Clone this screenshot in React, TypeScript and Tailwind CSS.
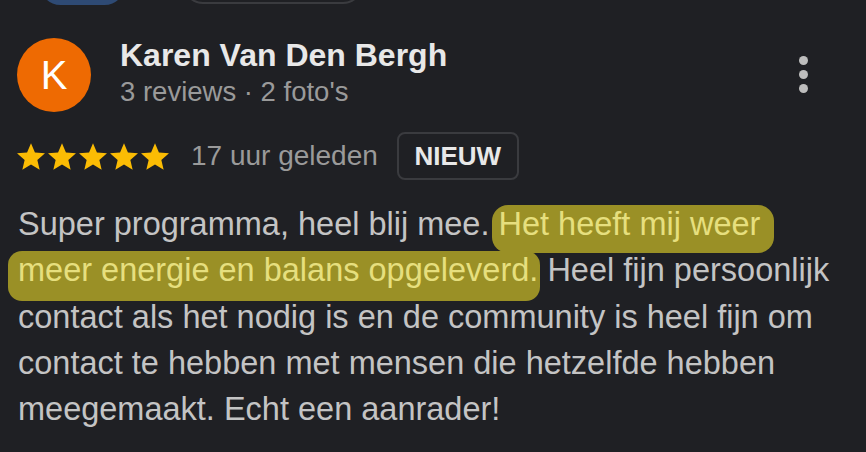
import React from 'react';

const Star = () => (
  <svg viewBox="2 2 20 19" width="28" height="27" className="block">
    <path
      d="M12 17.27L18.18 21l-1.64-7.03L22 9.24l-7.19-.61L12 2 9.19 8.63 2 9.24l5.46 4.73L5.82 21z"
      fill="#fbbc04"
    />
  </svg>
);

const App = () => {
  return (
    <div className="w-[866px] h-[452px] overflow-hidden bg-[#1f2024] font-['Liberation_Sans',Arial,sans-serif]">
      {/* cut-off buttons from the row above */}
      <div className="flex -mt-[36px] pl-[40px]">
        <div className="w-[85px] h-[41px] rounded-full bg-[#2e4a74]" />
        <div className="ml-[58px] w-[180px] h-[40px] rounded-full border-2 border-[#3a3b3f]" />
      </div>

      <div className="flex items-start pl-[17px] pr-[58px] mt-[33px]">
        <div className="w-[74px] h-[74px] rounded-full bg-[#ee6a02] flex items-center justify-center text-white text-[40px] leading-none">
          K
        </div>
        <div className="ml-[29px] flex-1">
          <div className="text-[32px] font-bold text-[#e8e8e8] leading-[36px] -mt-[1px]">
            Karen Van Den Bergh
          </div>
          <div className="text-[27.5px] text-[#9a9a9a] leading-[32px] mt-[3px]">
            3 reviews · 2 foto's
          </div>
        </div>
        <div className="flex flex-col gap-[5px] mt-[18px]">
          <span className="w-[9px] h-[9px] rounded-full bg-[#bdbdbd]" />
          <span className="w-[9px] h-[9px] rounded-full bg-[#bdbdbd]" />
          <span className="w-[9px] h-[9px] rounded-full bg-[#bdbdbd]" />
        </div>
      </div>

      <div className="flex items-center pl-[17px] mt-[20px]">
        <div className="flex gap-[3px]">
          <Star />
          <Star />
          <Star />
          <Star />
          <Star />
        </div>
        <span className="ml-[22px] text-[28px] text-[#9a9a9a]">17 uur geleden</span>
        <span className="ml-[19px] w-[122px] h-[48px] flex items-center justify-center rounded-[8px] border-2 border-[#3a3b3f] text-[26px] font-bold text-[#e8e8e8]">
          NIEUW
        </span>
      </div>

      <p className="pl-[18px] mt-[21px] text-[32.5px] leading-[46.3px] text-[#c4c4c4] whitespace-nowrap">
        Super programma, heel blij mee.{' '}
        <span className="bg-[#9a9026] text-[#e6df7e] pt-[1px] pb-[11px] pl-[7px] pr-[14px] -ml-[7px] -mr-[14px] rounded-[16px]">
          Het heeft mij weer
        </span>
        <br />
        <span className="bg-[#9a9026] text-[#e6df7e] pt-[1px] pb-[13px] pl-[10px] pr-[2px] -ml-[10px] -mr-[2px] rounded-[14px]">
          meer energie en balans opgeleverd.
        </span>{' '}
        Heel fijn persoonlijk
        <br />
        contact als het nodig is en de community is heel fijn om
        <br />
        contact te hebben met mensen die hetzelfde hebben
        <br />
        meegemaakt. Echt een aanrader!
      </p>
    </div>
  );
};

export default App;
